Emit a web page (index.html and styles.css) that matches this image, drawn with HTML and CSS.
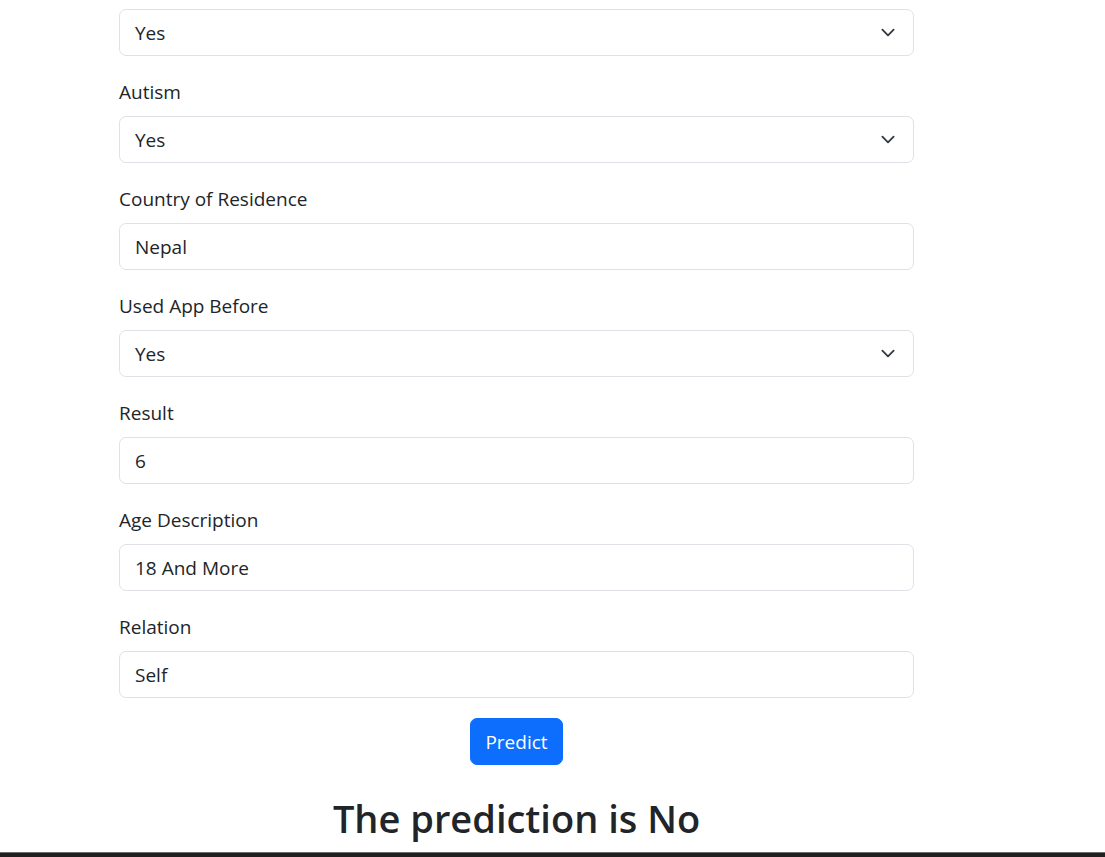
FILE: index.html
```html
<!DOCTYPE html>
<html lang="en">
<head>
<meta charset="utf-8">
<title>Prediction</title>
<link rel="stylesheet" href="styles.css">
</head>
<body>
<main class="page">
  <form class="form">
    <div class="field field-first">
      <div class="select">Yes</div>
    </div>
    <div class="field">
      <label class="label">Autism</label>
      <div class="select">Yes</div>
    </div>
    <div class="field">
      <label class="label">Country of Residence</label>
      <div class="input">Nepal</div>
    </div>
    <div class="field">
      <label class="label">Used App Before</label>
      <div class="select">Yes</div>
    </div>
    <div class="field">
      <label class="label">Result</label>
      <div class="input">6</div>
    </div>
    <div class="field">
      <label class="label">Age Description</label>
      <div class="input">18 And More</div>
    </div>
    <div class="field">
      <label class="label">Relation</label>
      <div class="input">Self</div>
    </div>
    <div class="actions">
      <button type="button" class="btn">Predict</button>
    </div>
    <h2 class="result">The prediction is No</h2>
  </form>
</main>
<div class="taskbar"></div>
</body>
</html>
```
FILE: styles.css
```css
html, body {
  margin: 0;
  padding: 0;
  background: #fff;
}
body {
  font-family: "Open Sans", "Noto Sans", sans-serif;
  color: #212529;
  font-size: 19px;
  overflow: hidden;
  height: 857px;
}
.page {
  padding-top: 9px;
}
.form {
  margin-left: 119px;
  width: 795px;
}
.field {
  margin-bottom: 20px;
}
.label {
  display: block;
  height: 32px;
  line-height: 32px;
  margin-bottom: 8px;
}
.input, .select {
  box-sizing: border-box;
  height: 47px;
  line-height: 47px;
  padding: 0 15px;
  border: 1px solid #dee2e6;
  border-radius: 7px;
  background: #fff;
}
.select {
  background-image: url("data:image/svg+xml,%3csvg xmlns='http://www.w3.org/2000/svg' viewBox='0 0 16 16'%3e%3cpath fill='none' stroke='%23343a40' stroke-linecap='round' stroke-linejoin='round' stroke-width='2' d='m2 5 6 6 6-6'/%3e%3c/svg%3e");
  background-repeat: no-repeat;
  background-position: right 15px center;
  background-size: 20px 15px;
}
.actions {
  display: flex;
  justify-content: center;
}
.btn {
  font-family: inherit;
  font-size: 19px;
  line-height: 30px;
  height: 47px;
  width: 93px;
  padding: 0;
  color: #fff;
  background: #0d6efd;
  border: 1px solid #0d6efd;
  border-radius: 7px;
}
.result {
  margin: 31px 0 0;
  text-align: center;
  font-size: 38px;
  font-weight: 600;
  line-height: 1.2;
}
.taskbar {
  position: fixed;
  left: 0;
  right: 0;
  bottom: 0;
  height: 4px;
  background: #202020;
  border-top: 1px solid #6e6e6e;
}
```
